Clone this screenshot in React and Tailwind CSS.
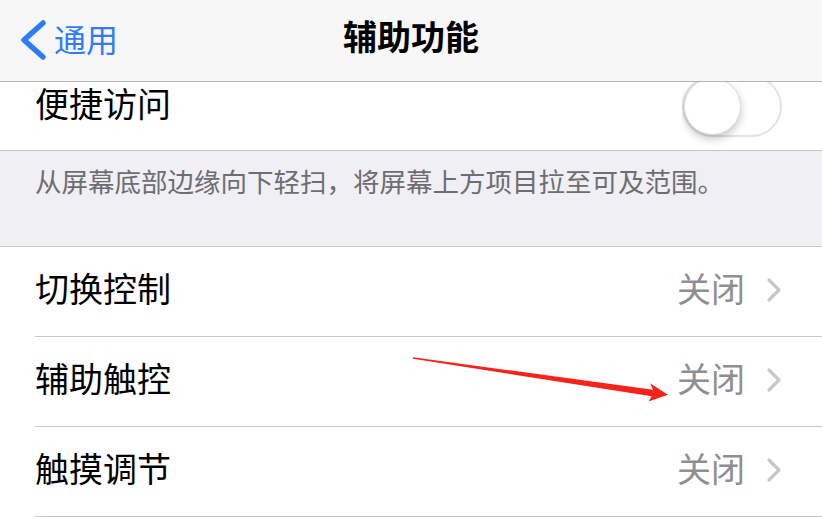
import React from "react";

const font = { fontFamily: '"Noto Sans CJK SC", "Noto Sans", sans-serif' };

function Chevron() {
  return (
    <svg width="18" height="26" viewBox="0 0 18 26" className="ml-[20px] mt-[4px]">
      <path d="M4 3 L14 13 L4 23" fill="none" stroke="#c7c7cc" strokeWidth="3.2" strokeLinecap="round" strokeLinejoin="round" />
    </svg>
  );
}

function Row({ label, value }) {
  return (
    <div className="bg-white pl-[35px]">
      <div className="h-[90px] pb-[7px] flex items-center justify-between pr-[39px] border-b border-[#c8c7cc]">
        <span className="text-[34px] text-black leading-none">{label}</span>
        <div className="flex items-center">
          <span className="text-[34px] text-[#8e8e93] leading-none">{value}</span>
          <Chevron />
        </div>
      </div>
    </div>
  );
}

export default function App() {
  const rows = [
    { label: "切换控制", value: "关闭" },
    { label: "辅助触控", value: "关闭" },
    { label: "触摸调节", value: "关闭" },
  ];

  return (
    <div className="relative w-[822px] h-[517px] overflow-hidden bg-[#efeff4]" style={font}>
      {/* Nav bar */}
      <div className="h-[82px] pb-[6px] bg-[#f7f7f8] border-b border-[#b4b4b4] flex items-center relative">
        <div className="flex items-center pl-[17px] text-[#2f7cf6]">
          <svg width="32" height="42" viewBox="0 0 32 42" className="mt-[4px]">
            <path d="M26 4 L7 21 L26 38" fill="none" stroke="#2f7cf6" strokeWidth="5.5" strokeLinecap="round" strokeLinejoin="round" />
          </svg>
          <span className="text-[32px] leading-none ml-[5px]">通用</span>
        </div>
        <div className="absolute inset-0 pb-[9px] flex items-center justify-center pointer-events-none">
          <span className="text-[34px] font-bold text-black leading-none">辅助功能</span>
        </div>
      </div>

      {/* Reachability row, partly scrolled under the nav */}
      <div className="h-[69px] bg-white border-b border-[#c8c7cc] flex justify-between pl-[35px] pr-[40px]">
        <span className="text-[34px] text-black leading-none pt-[4px]">便捷访问</span>
        <div className="h-full overflow-hidden flex items-end pb-[13px]">
          <div className="w-[100px] h-[61px] shrink-0 rounded-full border-[2px] border-[#e3e3e6] bg-white flex items-center">
            <div className="w-[57px] h-[57px] rounded-full bg-white border border-[#dcdcdc] shadow-[0_4px_8px_rgba(0,0,0,0.22)]" />
          </div>
        </div>
      </div>

      {/* Footer text */}
      <div className="h-[96px] pt-[12px] pl-[35px] border-b border-[#c8c7cc]">
        <p className="text-[26.5px] leading-[36px] text-[#6d6d72]">
          从屏幕底部边缘向下轻扫，将屏幕上方项目拉至可及范围。
        </p>
      </div>

      <div className="bg-white">
        {rows.map((r) => (
          <Row key={r.label} label={r.label} value={r.value} />
        ))}
      </div>

      {/* red annotation arrow */}
      <svg className="absolute left-0 top-0 pointer-events-none" width="822" height="517" viewBox="0 0 822 517">
        <polygon
          points="413,357.2 653,389.8 650,383.3 668,394.8 648.5,401.6 651.6,396.2 413,358.8"
          fill="#f7231a"
        />
      </svg>
    </div>
  );
}
